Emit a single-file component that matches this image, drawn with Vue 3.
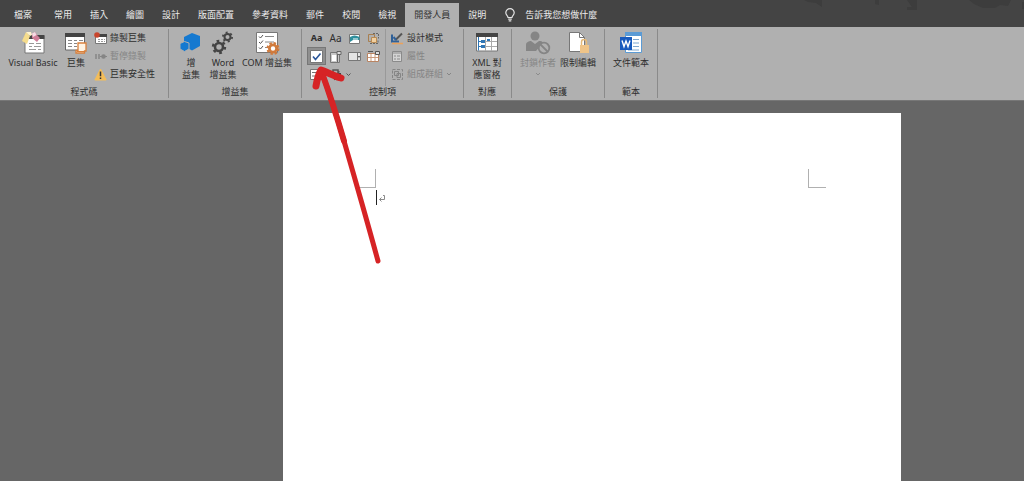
<script setup>
import { ref } from 'vue'

const tabs = ['檔案', '常用', '插入', '繪圖', '設計', '版面配置', '參考資料', '郵件', '校閱', '檢視', '開發人員', '說明']
const active = ref('開發人員')
</script>

<template>
  <div class="app">
    <nav class="tabs">
      <button
        v-for="(tab, i) in tabs"
        :key="tab"
        class="tab"
        :class="{ file: i === 0, active: tab === active }"
        @click="active = tab"
      >{{ tab }}</button>
      <button class="tell-me">
        <svg width="12" height="14" viewBox="0 0 12 14" fill="none" stroke="#e6e6e6" stroke-width="1.2">
          <path d="M4 9.5C4 8 1.8 7.2 1.8 4.8a4.2 4.2 0 0 1 8.4 0C10.200 7.200 8 8 8 9.500Z" />
          <path d="M4.200 11.200h3.600M4.700 12.800h2.600" />
        </svg>
        <span>告訴我您想做什麼</span>
      </button>
      <svg class="art" width="230" height="12" viewBox="0 0 230 12" fill="#3d3d3d">
        <path d="M10 0h18v7l-6-4-8-1ZM81 0h4v5l-4-1ZM113 0h10v10h-10v-3h5ZM175 0h42l-3 6-8-1-5 3h-12l-9-4ZM228 2h2v7h-2Z" />
      </svg>
    </nav>

    <div class="ribbon">
      <section class="group">
        <div class="body">
          <button class="big w54">
            <svg width="24" height="24" viewBox="0 0 24 24">
              <path d="M4 5h19v17H4Z" fill="#fff" stroke="#777" />
              <path d="M4 4h19.500v4H4Z" fill="#444" />
              <path d="M8 12.500h5M15 12.500h5M8 15.500h3M13 15.500h7M8 18.500h7M17 18.500h3" stroke="#999" />
              <path d="m5 1 4 4-3 8-5-3Z" fill="#f5dc8c" />
              <path d="m5 1 4 4 2-1-1-3Z" fill="#fff3cc" />
              <path d="M11 2.500 14 1l2 3 3 3-3 4-5-4Z" fill="#cf7e98" />
              <path d="m11 2.500 3-1.500 1.500 3L12 6Z" fill="#f5dce4" />
            </svg>
            <span>Visual Basic</span>
          </button>
          <button class="big w32">
            <svg width="24" height="24" viewBox="0 0 24 24">
              <path d="M1.500 3h19v16h-19Z" fill="#fff" stroke="#666" />
              <path d="M1 2h20v4H1Z" fill="#444" />
              <path d="M4 9.500h4M10 9.500h3M15 9.500h4M4 12.500h4M10 12.500h3M4 15.500h4M10 15.500h3" stroke="#888" />
              <path d="M14 12h8v8h-1.500v2H12v-2.500h2Z" fill="#fff4e4" stroke="#d9803c" stroke-width="1.300" />
              <path d="M13 20.500h7" stroke="#d9803c" />
            </svg>
            <span>巨集</span>
          </button>
          <div class="stack">
            <button class="small">
              <svg width="13" height="13" viewBox="0 0 13 13">
                <path d="M1.500 2.500h11v9h-11Z" fill="#fff" stroke="#777" />
                <path d="M3 2h10v3H3Z" fill="#444" />
                <path d="M4 7.500h2M7 7.500h2M10 7.500h1M4 9.500h2M7 9.500h2M10 9.500h1" stroke="#999" />
                <circle cx="3" cy="3" r="2.800" fill="#c8452c" />
              </svg>
              <span>錄製巨集</span>
            </button>
            <button class="small" disabled>
              <svg width="13" height="13" viewBox="0 0 13 13">
                <path d="M2 4v5M5 4v5" stroke="#858585" stroke-width="1.500" />
                <circle cx="9.500" cy="6.500" r="2.300" fill="#858585" />
                <path d="M6 6.500h7" stroke="#858585" />
              </svg>
              <span>暫停錄製</span>
            </button>
            <button class="small">
              <svg width="13" height="13" viewBox="0 0 13 13">
                <path d="m6.500 1 5.700 11H.8Z" fill="#f4bd58" stroke="#f4bd58" stroke-linejoin="round" />
                <path d="M6.500 3.500v4.800M6.500 9.500v1.500" stroke="#333" stroke-width="1.500" />
              </svg>
              <span>巨集安全性</span>
            </button>
          </div>
        </div>
        <h2>程式碼</h2>
      </section>

      <section class="group">
        <div class="body">
          <button class="big w32">
            <svg width="24" height="24" viewBox="0 0 24 24">
              <path d="m13 2 8 3v10l-8 4.500-8-4.500V6Z" fill="#1579d0" />
              <path d="M5.500 10.500 10 12v6l-4.500 2.500L1 18v-5.500Z" fill="#1579d0" stroke="#b0b0b0" />
            </svg>
            <span>增<br>益集</span>
          </button>
          <button class="big w32">
            <svg width="24" height="24" viewBox="0 0 24 24" fill="none" stroke="#444">
              <circle cx="8" cy="16" r="4" stroke-width="2.600" />
              <circle cx="8" cy="16" r="6" stroke-width="2.400" stroke-dasharray="2.700 3.580" />
              <circle cx="16.500" cy="6" r="3" stroke-width="2" />
              <circle cx="16.500" cy="6" r="4.600" stroke-width="1.800" stroke-dasharray="2 2.817" />
            </svg>
            <span>Word<br>增益集</span>
          </button>
          <button class="big w56">
            <svg width="26" height="24" viewBox="0 0 26 24">
              <path d="M2.500 1.500h21v20h-21Z" fill="#fff" stroke="#777" />
              <path d="m5 5.500 1.500 1.500L9 4M5 11l1.500 1.500L9 9.500M5 16.500 6.500 18 9 15" fill="none" stroke="#555" />
              <path d="M11 5.500h9M11 11h9M11 16.500h3" stroke="#888" />
              <circle cx="19" cy="17.500" r="3.600" fill="#fff" stroke="#d07a3c" stroke-width="2.800" />
              <circle cx="19" cy="17.500" r="5.500" fill="none" stroke="#d07a3c" stroke-width="2" stroke-dasharray="2.400 1.920" />
            </svg>
            <span>COM 增益集</span>
          </button>
        </div>
        <h2>增益集</h2>
      </section>

      <section class="group control-group">
        <div class="body">
          <div class="controls">
            <button class="cell aa bold">Aa</button>
            <button class="cell aa">Aa</button>
            <button class="cell" aria-label="圖片">
              <svg width="13" height="13" viewBox="0 0 13 13">
                <path d="M1.500 2.500h10v9h-10Z" fill="#fff" stroke="#777" />
                <path d="M2 5c3-2 6-2 9.500 0v3H5L2 10Z" fill="#2f8f9d" />
                <path d="M5 7h5" stroke="#fff" />
              </svg>
            </button>
            <button class="cell" aria-label="建置組塊庫">
              <svg width="13" height="13" viewBox="0 0 13 13" fill="none">
                <path d="M1.500 2.500h6v7h-6Z" stroke="#a87f50" />
                <path d="M6 1.500h5.500v5M3 11.500h8v-4" stroke="#666" stroke-dasharray="2 1" />
                <path d="M4.500 5.500h5v5h-5Z" fill="#f0cfa0" stroke="#b98a52" />
              </svg>
            </button>
            <label class="cell pressed">
              <input type="checkbox" checked aria-label="核取方塊">
              <svg width="13" height="13" viewBox="0 0 13 13">
                <path d="M.5.5h12v12H.5Z" fill="#fff" stroke="#777" />
                <path d="m3 6.500 2.500 3 5-6" fill="none" stroke="#2b579a" stroke-width="1.600" />
              </svg>
            </label>
            <button class="cell" aria-label="下拉式方塊">
              <svg width="13" height="13" viewBox="0 0 13 13">
                <path d="M1.500 2.500h9v10h-9Z" fill="#c8c8c8" stroke="#777" />
                <path d="M3 5h4v6H3Z" fill="#fff" />
                <path d="M8.500 4v8M8 1.500h4v3H8Z" stroke="#666" fill="#ddd" />
              </svg>
            </button>
            <button class="cell" aria-label="下拉式清單">
              <svg width="13" height="13" viewBox="0 0 13 13">
                <path d="M.5 2.500h12v8H.5Z" fill="#e4e4e4" stroke="#777" />
                <path d="M9.500 3v7" stroke="#777" />
                <path d="M10 6h2l-1 2Z" fill="#333" />
              </svg>
            </button>
            <button class="cell" aria-label="日期選擇器">
              <svg width="13" height="13" viewBox="0 0 13 13">
                <path d="M.5 3.500h11v8H.5Z" fill="#fff" stroke="#b98462" />
                <path d="M4 4v7M8 4v7M1 7.500h10" stroke="#c99a7c" />
                <path d="M1 1.500h5M8.500 1.500h4v3h-4Z" fill="#ddd" stroke="#555" />
              </svg>
            </button>
            <button class="cell" aria-label="重複區段">
              <svg width="13" height="13" viewBox="0 0 13 13">
                <path d="M.5 1.500h11v10H.5Z" fill="#fff" stroke="#777" />
                <path d="M2 4.500h8M2 8h5" stroke="#777" />
                <path d="M8 8h4v4H8Z" fill="#3f66a8" />
              </svg>
            </button>
            <button class="cell legacy" aria-label="舊表單工具">
              <svg width="24" height="13" viewBox="0 0 24 13">
                <path d="M1 5h11v3H1Z" fill="#444" />
                <path d="M4 5V2h5v3" fill="none" stroke="#555" stroke-width="1.500" />
                <path d="m3 4 3 8M10 3 7 12" stroke="#555" stroke-width="1.500" />
                <path d="M8 8h4l-2 4Z" fill="#4f7fa8" />
                <path d="m17.500 5.500 2 2 2-2" fill="none" stroke="#555" />
              </svg>
            </button>
          </div>
          <div class="stack ruled">
            <button class="small">
              <svg width="13" height="13" viewBox="0 0 13 13">
                <path d="M1 2.500v7h7" fill="none" stroke="#2f6098" stroke-width="2" />
                <path d="m4.500 8 6.500-6.500" stroke="#555" stroke-width="2" />
                <path d="m2.500 5 2.500 3" stroke="#2f6098" stroke-width="2" />
                <path d="M1 11.500h11" stroke="#eaa25c" stroke-width="1.500" />
              </svg>
              <span>設計模式</span>
            </button>
            <button class="small" disabled>
              <svg width="13" height="13" viewBox="0 0 13 13">
                <path d="M1.500 1.500h9v10h-9Z" fill="#d4d4d4" stroke="#8a8a8a" />
                <path d="M1 3h10M3 6h2M6 6h3M3 9h2M6 9h3" stroke="#8a8a8a" />
              </svg>
              <span>屬性</span>
            </button>
            <button class="small" disabled>
              <svg width="13" height="13" viewBox="0 0 13 13" fill="none" stroke="#858585">
                <path d="M1.500 1.500h10v10h-10Z" stroke-dasharray="3 1.500" />
                <path d="M3.500 3.500h4v4h-4ZM6 5.500h3.500v4H6Z" />
              </svg>
              <span>組成群組</span>
              <svg width="6" height="6" viewBox="0 0 6 6" fill="none" stroke="#858585"><path d="m1 2 2 2 2-2" /></svg>
            </button>
          </div>
        </div>
        <h2>控制項</h2>
      </section>

      <section class="group snug">
        <div class="body">
          <button class="big w40">
            <svg width="24" height="24" viewBox="0 0 24 24">
              <path d="M1.500 3h21v17h-21Z" fill="#fff" stroke="#777" />
              <path d="M1 2h22v4H1Z" fill="#444" />
              <path d="M3.500 6v13.500M3.500 10.500h3M3.500 15.500h3" stroke="#2f76b5" fill="none" />
              <path d="M10.500 6v14M16.500 6v14M10 10.500h12M10 15.500h12" stroke="#aaa" />
              <path d="M6 9h4v3H6ZM6 14h4v3H6ZM12 8h3v2h-3Z" fill="#2f76b5" />
            </svg>
            <span>XML 對<br>應窗格</span>
          </button>
        </div>
        <h2>對應</h2>
      </section>

      <section class="group">
        <div class="body">
          <button class="big w40" disabled>
            <svg width="26" height="24" viewBox="0 0 26 24" fill="#858585">
              <circle cx="10" cy="5" r="4.500" />
              <path d="M1 20v-6c0-3 3-4 5-4l4 3 4-3c2 0 3 0 4 2l-7 8Z" />
              <circle cx="19" cy="17" r="5.300" fill="#b0b0b0" stroke="#858585" stroke-width="1.800" />
              <path d="m15.500 13.500 7 7" stroke="#858585" stroke-width="1.800" />
            </svg>
            <span>封鎖作者</span>
            <svg width="6" height="6" viewBox="0 0 6 6" fill="none" stroke="#8c8c8c"><path d="m1 2 2 2 2-2" /></svg>
          </button>
          <button class="big w40">
            <svg width="24" height="24" viewBox="0 0 24 24">
              <path d="M3.500 1.500h10l5 5v14h-15Z" fill="#fff" stroke="#777" />
              <path d="M13.500 1.500v5h5" fill="none" stroke="#777" />
              <path d="M15.500 14v-3a2.500 2.500 0 0 1 5 0v3" fill="none" stroke="#e3b878" stroke-width="1.500" />
              <path d="M14 14h9v8h-9Z" fill="#efc488" />
            </svg>
            <span>限制編輯</span>
          </button>
        </div>
        <h2>保護</h2>
      </section>

      <section class="group">
        <div class="body">
          <button class="big w40">
            <svg width="24" height="24" viewBox="0 0 24 24">
              <path d="M6.500 2.500h16v19h-16Z" fill="#fff" stroke="#5b9bd5" />
              <path d="M6 1h17v4H6Z" fill="#5b9bd5" />
              <path d="M14 8.500h6M14 12h6M14 15.500h6M9 19h11" stroke="#7fa8d0" />
              <path d="M1 6h12v13H1Z" fill="#185abd" />
              <path d="m3 9.500 2 6 2-5.500 2 5.500 2-6" fill="none" stroke="#fff" stroke-width="1.400" />
            </svg>
            <span>文件範本</span>
          </button>
        </div>
        <h2>範本</h2>
      </section>
    </div>

    <main class="workspace">
      <article class="page">
        <div class="marks">
          <i class="mark left"></i>
          <i class="mark right"></i>
        </div>
        <p class="line">
          <span class="caret"></span>
          <svg width="8" height="8" viewBox="0 0 8 8" fill="none" stroke="#8a8a8a">
            <path d="M5 1.500h1.500v4h-5M3.500 3.500l-2 2 2 2" />
          </svg>
        </p>
      </article>
    </main>

    <svg class="arrow" width="74" height="204" viewBox="0 0 74 204" fill="none" stroke="#d62325" stroke-linecap="round" stroke-linejoin="round">
      <path d="M68 201C56 157 45 119 34 81 27 57 19 32 12 13" stroke-width="5" />
      <path d="M34 81C27 57 19 32 12 13" stroke-width="6" />
      <path d="M6 26C7 20 8 15 11 10c6 2 13 6 20 8" stroke-width="7" />
    </svg>
  </div>
</template>

<style>
body {
  background: #666;
}
</style>

<style scoped>
.app {
  position: relative;
  display: flex;
  flex-direction: column;
  min-height: 100vh;
  background: #666;
  color: #2e2e2e;
  font-family: "Noto Sans", "Noto Sans CJK TC", sans-serif;
  font-size: 9px;
  line-height: 12px;
}

button {
  margin: 0;
  padding: 0;
  border: 0;
  background: none;
  color: inherit;
  font: inherit;
}

svg {
  display: block;
  flex: none;
}

.tabs {
  position: relative;
  display: flex;
  align-items: flex-end;
  height: 27px;
  background: #444;
  color: #ececec;
}

.tab {
  height: 24px;
  padding: 0 9px;
  white-space: nowrap;
}

.tab.file {
  padding: 0 13px 0 14px;
}

.tab.active {
  background: #b0b0b0;
  color: #333;
}

.tell-me {
  display: flex;
  align-items: center;
  gap: 9px;
  height: 24px;
  margin-left: 9px;
}

.art {
  position: absolute;
  top: 0;
  right: 0;
}

.ribbon {
  display: flex;
  padding: 2px 0;
  background: #b0b0b0;
  border-bottom: 1px solid #777;
}

.group {
  display: flex;
  flex-direction: column;
  padding: 0 6px;
  border-right: 1px solid #8a8a8a;
}

.group.control-group {
  padding: 0 5px;
}

.group.snug {
  padding: 0 4px 0 3px;
}

.body {
  display: flex;
  height: 57px;
}

h2 {
  margin: 0;
  font-size: 9px;
  font-weight: 400;
  line-height: 12px;
  text-align: center;
}

.big {
  display: flex;
  flex-direction: column;
  align-items: center;
  gap: 2px;
  padding-top: 2px;
  white-space: nowrap;
}

.big:disabled,
.small:disabled {
  color: #858585;
}

.w32 {
  width: 32px;
}

.w40 {
  width: 40px;
}

.w54 {
  width: 54px;
}

.w56 {
  width: 56px;
}

.stack {
  display: flex;
  flex-direction: column;
  padding: 0 7px 0 2px;
}

.small {
  display: flex;
  align-items: center;
  gap: 3px;
  height: 18px;
  white-space: nowrap;
}

.ruled {
  margin-left: 2px;
  padding: 0 6px 0 5px;
  border-left: 1px solid #999;
}

.controls {
  display: grid;
  grid-template-columns: repeat(4, 19px);
  grid-auto-rows: 18px;
}

.cell {
  display: flex;
  align-items: center;
  justify-content: center;
}

.aa {
  font-size: 10px;
}

.bold {
  font-size: 9px;
  font-weight: 700;
}

.pressed {
  position: relative;
  background: #8f8f8f;
  outline: 1px solid #777;
  outline-offset: -1px;
}

.pressed input {
  position: absolute;
  inset: 0;
  margin: 0;
  opacity: 0;
}

.legacy {
  grid-column: span 2;
  justify-content: flex-start;
  padding-left: 3px;
}

.workspace {
  display: flex;
  flex: 1;
  padding: 12px 123px 0 283px;
}

.page {
  flex: 1;
  padding: 56px 75px 0;
  background: #fff;
}

.marks {
  display: flex;
  justify-content: space-between;
}

.mark {
  width: 17px;
  height: 18px;
  border-bottom: 1px solid #b0b0b0;
}

.left {
  border-right: 1px solid #b0b0b0;
}

.right {
  border-left: 1px solid #b0b0b0;
}

.line {
  display: flex;
  align-items: center;
  gap: 1px;
  margin: 2px 0 0 18px;
}

.caret {
  width: 1px;
  height: 15px;
  background: #222;
}

.arrow {
  position: absolute;
  top: 60px;
  left: 310px;
  pointer-events: none;
}
</style>
